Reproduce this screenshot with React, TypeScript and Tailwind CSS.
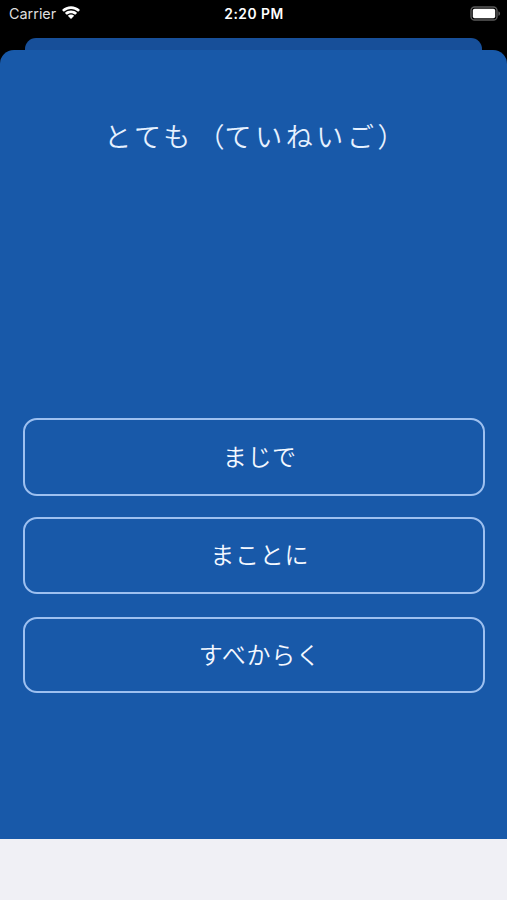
import React from 'react';

const WifiIcon = () => (
  <svg className="-mt-0.5 ml-[5px] h-[14px] w-[20px]" viewBox="0 0 20 14">
    <path d="M1 5C6 0.1 14 0.1 19 5L17.2 6.8C13.2 2.9 6.8 2.9 2.8 6.8Z" fill="white" />
    <path d="M3.9 7.9C7.3 4.7 12.7 4.7 16.1 7.9L14.2 9.8C11.8 7.6 8.2 7.6 5.8 9.8Z" fill="white" />
    <path d="M6.8 10.8C8.6 9.2 11.4 9.2 13.2 10.8L10 14Z" fill="white" />
  </svg>
);

const BatteryIcon = () => (
  <svg className="-mt-px h-[15px] w-[31px]" viewBox="0 0 31 15">
    <rect x="1" y="1" width="26" height="13" rx="3.6" fill="none" stroke="#5b5b5b" strokeWidth="1.4" />
    <rect x="2.8" y="2.8" width="22.4" height="9.4" rx="1.8" fill="white" />
    <path d="M28.4 5.2C30.6 6 30.6 9 28.4 9.8Z" fill="#5b5b5b" />
  </svg>
);

const StatusBar = () => (
  <header className="grid h-[27px] grid-cols-3 items-center text-white">
    <div className="flex items-center pl-[9px] text-[14.4px] text-[#dedede]">
      Carrier
      <WifiIcon />
    </div>
    <div className="pt-px pl-px text-center text-[13.8px] font-semibold tracking-[0.5px]">2:20 PM</div>
    <div className="flex justify-end pr-[6px]">
      <BatteryIcon />
    </div>
  </header>
);

const AnswerButton = ({ label, className }: { label: string; className: string }) => (
  <button
    className={`block w-full rounded-[14px] border-2 border-[#9dc0f0] pb-[3px] pl-3 font-['Noto_Sans_CJK_JP',sans-serif] text-[24px] leading-none font-[350] tracking-[0.7px] text-[#f4f8ff] ${className}`}
  >
    {label}
  </button>
);

const App = () => {
  return (
    <div className="flex h-[900px] w-[507px] flex-col overflow-hidden bg-black font-['Inter',sans-serif]">
      <StatusBar />

      {/* Edge of the sheet underneath */}
      <div className="mx-[25px] mt-[11px] h-3 rounded-t-[11px] bg-[#174f99]" />

      {/* Quiz sheet */}
      <main className="h-[789px] rounded-t-[14px] bg-[#1859a9] pr-[22px] pl-[22.5px]">
        <h1 className="-mx-4 h-[368px] pt-[71px] pl-[5px] text-center font-['Noto_Sans_CJK_JP',sans-serif] text-[27px] leading-[30px] font-[350] tracking-[3.6px] whitespace-nowrap text-[#e6f1ff]">
          とても<span className="ml-[3.6px] tracking-normal">（</span>ていねいご）
        </h1>
        <AnswerButton label="まじで" className="h-[78px]" />
        <AnswerButton label="まことに" className="mt-[21px] h-[77px]" />
        <AnswerButton label="すべからく" className="mt-[23px] h-[76px]" />
      </main>

      <footer className="flex-1 bg-[#f0f0f5]" />
    </div>
  );
};

export default App;
